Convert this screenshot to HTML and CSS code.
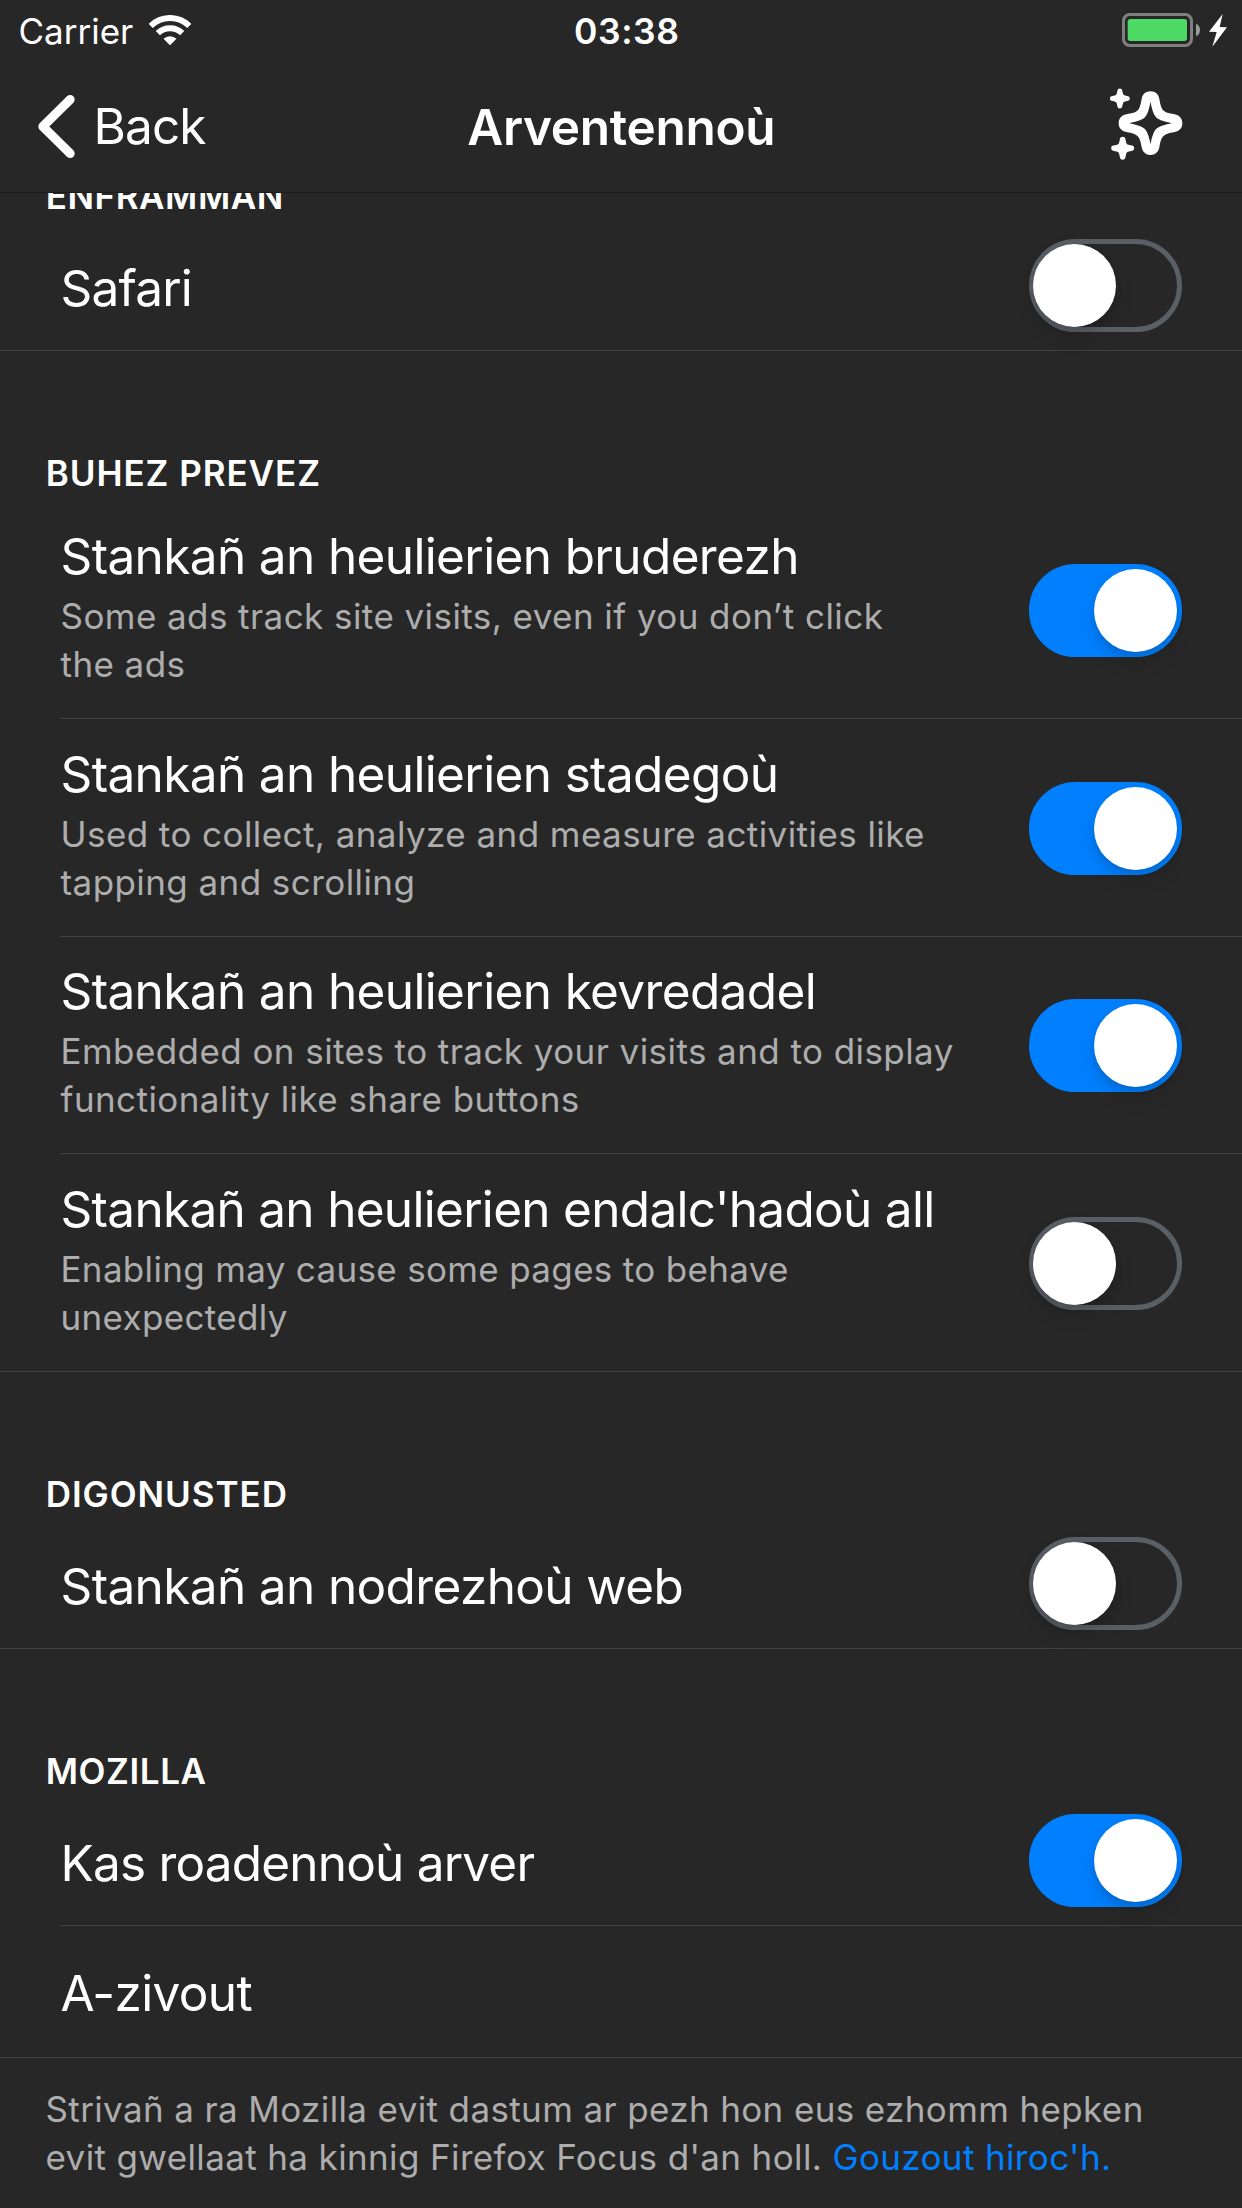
FILE: index.html
```
<!DOCTYPE html>
<html lang="br">
<head>
<meta charset="utf-8">
<title>Arventennoù</title>
<link rel="stylesheet" href="styles.css">
</head>
<body>
<div class="screen">
  <header class="status-bar">
    <div class="status-left">
      <span class="carrier">Carrier</span>
      <svg class="wifi" viewBox="450 44 126 91" aria-hidden="true">
        <path d="M455 77A82 82 0 0 1 571 77M476.500 98.500A52 52 0 0 1 549.500 98.500" fill="none" stroke="#fff" stroke-width="18"/>
        <path d="M513 135L493.500 115.500A28 28 0 0 1 532.500 115.500Z" fill="#fff"/>
      </svg>
    </div>
    <span class="clock">03:38</span>
    <svg class="battery" viewBox="306 39 315 102" aria-hidden="true">
      <rect x="310.500" y="43.500" width="204" height="93" rx="19" fill="none" stroke="#7f7f7f" stroke-width="9"/>
      <rect x="323" y="57" width="178" height="66" rx="8" fill="#4cd964"/>
      <path d="M528 71Q540 76 540 90T528 109Z" fill="#9a9a9a"/>
      <path d="M608 42L567 95L590 96L577 140L621 82L599 81Z" fill="#fff"/>
    </svg>
  </header>

  <nav class="nav-bar">
    <a class="back">
      <svg class="chevron" viewBox="115 285 111 189" aria-hidden="true">
        <path d="M211.500 298.500L129.500 379.500L211.500 460.500" fill="none" stroke="#fff" stroke-width="27" stroke-linecap="round" stroke-linejoin="round"/>
      </svg>
      <span class="back-label">Back</span>
    </a>
    <h1 class="nav-title">Arventennoù</h1>
    <svg class="sparkle" viewBox="270 265 217 216" aria-hidden="true">
      <path fill="#fff" fill-rule="evenodd" d="M391.500 275C406 275 416 284 418 298C422 320 425 327 430 332C435 338 445 341 464 344C478 347 487 356 487 370.500C487 385 478 394 464 397C445 400 436 404 430 410C424 416 421 425 418 443C415 457 406 466 391.500 466C377 466 368 457 365 443C362 425 359 416 353 410C347 404 338 400 319 397C305 394 296 385 296 370.500C296 356 305 347 319 344C338 341 348 338 353 332C358 327 361 320 365 298C367 284 377 275 391.500 275ZM391.500 306C395 325 399 342 408 353C419 363 435 366 455 370.500C435 375 419 378 408 388C399 399 395 415 391.500 434C388 415 384 399 375 388C364 378 348 375 328 370.500C348 366 364 363 375 353C384 342 388 325 391.500 306Z"/>
      <path fill="#fff" transform="translate(299.500 296.500)" d="M-7 -25Q-6 -30 0 -30Q6 -30 7 -25Q9 -13 11 -11Q13 -9 25 -7Q30 -6 30 0Q30 6 25 7Q13 9 11 11Q9 13 7 25Q6 30 0 30Q-6 30 -7 25Q-9 13 -11 11Q-13 9 -25 7Q-30 6 -30 0Q-30 -6 -25 -7Q-13 -9 -11 -11Q-9 -13 -7 -25Z"/>
      <path fill="#fff" transform="translate(308 445.500) scale(1.150)" d="M-7 -25Q-6 -30 0 -30Q6 -30 7 -25Q9 -13 11 -11Q13 -9 25 -7Q30 -6 30 0Q30 6 25 7Q13 9 11 11Q9 13 7 25Q6 30 0 30Q-6 30 -7 25Q-9 13 -11 11Q-13 9 -25 7Q-30 6 -30 0Q-30 -6 -25 -7Q-13 -9 -11 -11Q-9 -13 -7 -25Z"/>
    </svg>
  </nav>

  <main class="settings">
    <section>
      <h2 class="section-title section-title--scrolled">ENFRAMMAN</h2>
      <div class="row row--end"><span class="label label--snug">Safari</span><span class="toggle"><span class="knob"></span></span></div>
    </section>

    <section>
      <h2 class="section-title section-title--spaced">BUHEZ PREVEZ</h2>
      <div class="row row--tall">
        <div class="text"><span class="label">Stankañ an heulierien bruderezh</span><p class="detail">Some ads track site visits, even if you don’t click<br>the ads</p></div>
        <span class="toggle toggle--on"><span class="knob"></span></span>
      </div>
      <div class="row row--tall">
        <div class="text"><span class="label">Stankañ an heulierien stadegoù</span><p class="detail">Used to collect, analyze and measure activities like<br>tapping and scrolling</p></div>
        <span class="toggle toggle--on"><span class="knob"></span></span>
      </div>
      <div class="row row--tall">
        <div class="text"><span class="label">Stankañ an heulierien kevredadel</span><p class="detail">Embedded on sites to track your visits and to display<br>functionality like share buttons</p></div>
        <span class="toggle toggle--on"><span class="knob"></span></span>
      </div>
      <div class="row row--tall row--end">
        <div class="text"><span class="label label--long">Stankañ an heulierien endalc'hadoù all</span><p class="detail detail--snug">Enabling may cause some pages to behave<br>unexpectedly</p></div>
        <span class="toggle"><span class="knob"></span></span>
      </div>
    </section>

    <section>
      <h2 class="section-title">DIGONUSTED</h2>
      <div class="row row--end"><span class="label">Stankañ an nodrezhoù web</span><span class="toggle"><span class="knob"></span></span></div>
    </section>

    <section>
      <h2 class="section-title section-title--snug">MOZILLA</h2>
      <div class="row"><span class="label label--snug">Kas roadennoù arver</span><span class="toggle toggle--on"><span class="knob"></span></span></div>
      <div class="row row--plain row--end"><span class="label">A-zivout</span></div>
      <p class="footnote">Strivañ a ra Mozilla evit dastum ar pezh hon eus ezhomm hepken<br>evit gwellaat ha kinnig Firefox Focus d'an holl. <a class="link">Gouzout hiroc'h.</a></p>
    </section>
  </main>
</div>
</body>
</html>
```
FILE: styles.css
```
* {
  box-sizing: border-box;
}

body {
  margin: 0;
  background: #272727;
  color: #fff;
  font-family: Inter, "Liberation Sans", sans-serif;
}

h1, h2, p {
  margin: 0;
}

svg {
  display: block;
  flex: none;
}

.screen {
  display: flex;
  flex-direction: column;
  width: 1242px;
  height: 2208px;
  overflow: hidden;
}

/* Status bar */
.status-bar {
  display: grid;
  grid-template-columns: 1fr auto 1fr;
  align-items: center;
  height: 60px;
  padding: 0 15px 0 18.5px;
  font-size: 35px;
  line-height: 42px;
}

.status-left {
  display: flex;
  align-items: center;
  gap: 16px;
}

.carrier {
  padding-top: 2px;
}

.clock {
  padding: 3px 0 0 8px;
  font-size: 35.5px;
  font-weight: 600;
  letter-spacing: 0.6px;
}

.wifi {
  width: 42px;
  height: 30.33px;
}

.battery {
  width: 105px;
  height: 34px;
  justify-self: end;
}

/* Navigation bar */
.nav-bar {
  display: grid;
  grid-template-columns: 1fr auto 1fr;
  align-items: center;
  height: 133px;
  padding: 0 59.5px 0 38px;
  border-bottom: 1px solid #1a1a1a;
  font-size: 49.5px;
  line-height: 60px;
}

.back {
  display: flex;
  align-items: center;
  gap: 18.5px;
}

.chevron {
  width: 37px;
  height: 63px;
}

.back-label {
  letter-spacing: -0.9px;
}

.nav-title {
  padding: 2px 0 0 22px;
  font-size: 49.5px;
  font-weight: 600;
  line-height: 60px;
  letter-spacing: -0.3px;
}

.sparkle {
  width: 72.33px;
  height: 72px;
  margin-top: -4px;
  justify-self: end;
}

/* Section headings */
.section-title {
  padding: 99px 45.7px 0;
  font-size: 35px;
  font-weight: 600;
  line-height: 46px;
  letter-spacing: 0.95px;
}

.section-title--scrolled {
  display: flex;
  align-items: flex-end;
  height: 26px;
  padding-top: 0;
  overflow: hidden;
  letter-spacing: 0.55px;
}

.section-title--spaced {
  padding-bottom: 5.33px;
}

.section-title--snug {
  letter-spacing: 0.6px;
}

/* Rows */
.row {
  display: flex;
  justify-content: space-between;
  align-items: flex-start;
  height: 132px;
  margin-left: 60px;
  padding: 20px 60px 0 0.5px;
  border-bottom: 1px solid #424242;
}

.row--end {
  margin-left: 0;
  padding-left: 60.5px;
}

.row--tall {
  height: 217.67px;
  padding-top: 24.6px;
}

.row--plain {
  padding-top: 18px;
}

.label {
  display: block;
  padding-top: 19px;
  font-size: 49.5px;
  line-height: 60px;
  letter-spacing: -0.63px;
  white-space: nowrap;
}

.label--snug {
  letter-spacing: -0.8px;
}

.label--long {
  letter-spacing: -0.7px;
}

.row--tall .label {
  padding-top: 0;
}

.detail {
  padding-top: 6px;
  color: #adadad;
  font-size: 35px;
  line-height: 48px;
  letter-spacing: 0.43px;
  white-space: nowrap;
}

.detail--snug {
  letter-spacing: 0.33px;
}

/* Switches */
.toggle {
  display: flex;
  flex: none;
  width: 153px;
  height: 93px;
  border: 5px solid #5a5f66;
  border-radius: 47px;
}

.row--tall .toggle {
  margin-top: 38.1px;
}

.knob {
  width: 83px;
  height: 83px;
  margin-left: -0.7px;
  border-radius: 50%;
  background: #fff;
  box-shadow: 0 9px 22px rgba(0, 0, 0, 0.12), 0 4px 6px rgba(0, 0, 0, 0.1);
}

.toggle--on {
  justify-content: flex-end;
  border-color: #0080ff;
  background: #0080ff;
}

.toggle--on .knob {
  margin: 0 0.3px 0 0;
}

/* Footer note */
.footnote {
  padding: 27px 45.5px 0;
  color: #adadad;
  font-size: 35px;
  line-height: 48px;
  letter-spacing: 0.37px;
  white-space: nowrap;
}

.link {
  color: #0080ff;
}
```
